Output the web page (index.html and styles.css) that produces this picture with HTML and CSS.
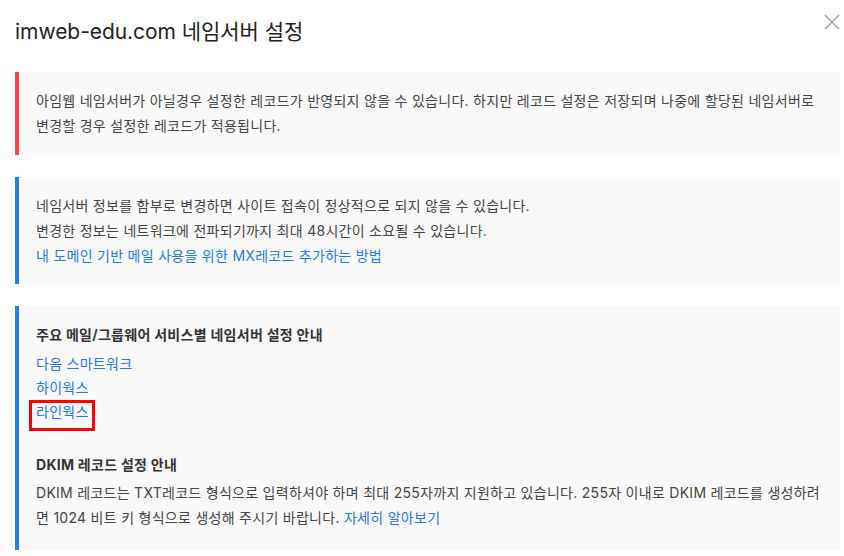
FILE: index.html
```html
<!DOCTYPE html>
<html lang="ko">
<head>
<meta charset="utf-8">
<link rel="stylesheet" href="styles.css">
</head>
<body>
<div class="modal">
  <header class="modal-header">
    <h1 class="modal-title">imweb-edu.com 네임서버 설정</h1>
    <button class="close" aria-label="닫기">
      <svg width="16" height="16" viewBox="0 0 16 16"><path d="M1 1L15 15M15 1L1 15" stroke="#999" stroke-width="1.2" fill="none"/></svg>
    </button>
  </header>
  <div class="modal-body">
    <div class="notice notice-red">
      <p>아임웹 네임서버가 아닐경우 설정한 레코드가 반영되지 않을 수 있습니다. 하지만 레코드 설정은 저장되며 나중에 할당된 네임서버로<br>변경할 경우 설정한 레코드가 적용됩니다.</p>
    </div>
    <div class="notice notice-blue">
      <p>네임서버 정보를 함부로 변경하면 사이트 접속이 정상적으로 되지 않을 수 있습니다.<br>변경한 정보는 네트워크에 전파되기까지 최대 48시간이 소요될 수 있습니다.<br><a href="#" class="link">내 도메인 기반 메일 사용을 위한 MX레코드 추가하는 방법</a></p>
    </div>
    <div class="notice notice-blue notice-guide">
      <h2 class="guide-title">주요 메일/그룹웨어 서비스별 네임서버 설정 안내</h2>
      <ul class="guide-links">
        <li><a href="#" class="link">다음 스마트워크</a></li>
        <li><a href="#" class="link">하이웍스</a></li>
        <li><a href="#" class="link highlighted">라인웍스</a></li>
      </ul>
      <h2 class="guide-title dkim-title">DKIM 레코드 설정 안내</h2>
      <p class="dkim-text">DKIM 레코드는 TXT레코드 형식으로 입력하셔야 하며 최대 255자까지 지원하고 있습니다. 255자 이내로 DKIM 레코드를 생성하려<br>면 1024 비트 키 형식으로 생성해 주시기 바랍니다. <a href="#" class="link">자세히 알아보기</a></p>
    </div>
  </div>
</div>
</body>
</html>
```

FILE: styles.css
```css
* { box-sizing: border-box; }
html, body { margin: 0; padding: 0; background: #fff; }
body {
  font-family: Inter, "Noto Sans CJK KR", sans-serif;
  color: #444;
  width: 844px;
  height: 556px;
  overflow: hidden;
}
.modal { padding: 0 4px 0 15px; }
.modal-header {
  display: flex;
  align-items: flex-start;
  justify-content: space-between;
  height: 72px;
}
.modal-title {
  margin: 18px 0 0;
  font-size: 21px;
  font-weight: 400;
  color: #222;
  line-height: 28px;
  letter-spacing: -0.05px;
}
.close {
  border: 0;
  background: none;
  padding: 0;
  margin: 14px 0 0;
  width: 16px;
  height: 16px;
  cursor: pointer;
}
.close svg { display: block; }
.modal-body { display: flex; flex-direction: column; gap: 22px; }
.notice {
  background: #f9f9f9;
  border-left: 4px solid #f5484d;
  padding: 16px 17px 17px;
  font-size: 14px;
  line-height: 25px;
  letter-spacing: 0.28px;
}
.notice p { margin: 0; }
.notice-blue { border-left-color: #2a7de1; padding-bottom: 16px; }
.notice-guide { padding-bottom: 20px; }
.link { color: #1f7ae6; text-decoration: none; }
.guide-title {
  margin: 0;
  font-size: 14px;
  font-weight: 700;
  line-height: 25px;
  color: #333;
}
.guide-links {
  list-style: none;
  margin: 5px 0 0;
  padding: 0;
  line-height: 24px;
}
.highlighted { position: relative; display: inline-block; }
.highlighted::after {
  content: "";
  position: absolute;
  left: -7px;
  right: -6px;
  top: 0;
  bottom: -7px;
  border: 3px solid #f00;
}
.dkim-title { margin-top: 28px; }
.dkim-text { margin-top: 3px !important; }
```
